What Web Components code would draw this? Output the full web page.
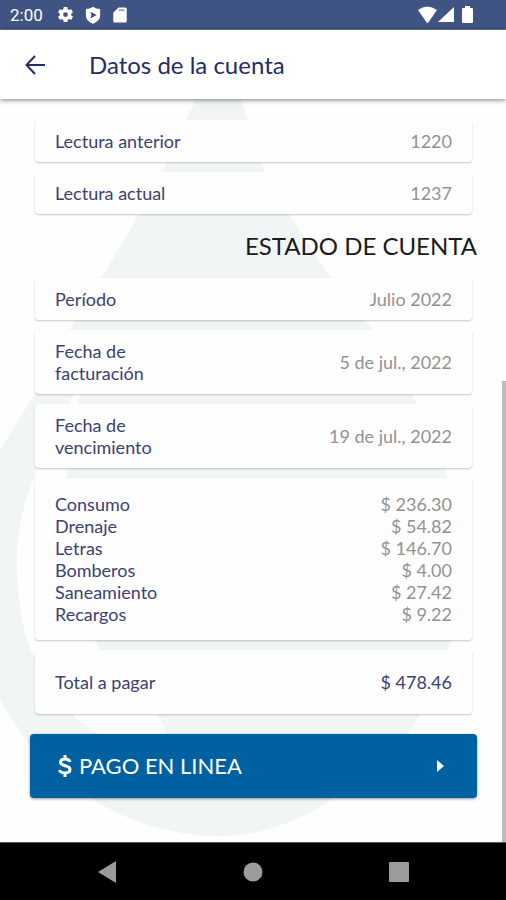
<!DOCTYPE html>
<html lang="es">
<head>
<meta charset="utf-8">
<meta name="viewport" content="width=device-width, initial-scale=1">
<title>Datos de la cuenta</title>
<style>
  html, body { margin: 0; }
  body { font-family: Lato, "Liberation Sans", sans-serif; background: #fefefe; }
</style>
</head>
<body>
<account-screen>
  <status-bar slot="status" time="2:00"></status-bar>
  <app-header slot="header">Datos de la cuenta</app-header>
  <info-card><info-row label="Lectura anterior">1220</info-row></info-card>
  <info-card><info-row label="Lectura actual">1237</info-row></info-card>
  <section-title>ESTADO DE CUENTA</section-title>
  <info-card><info-row label="Período">Julio 2022</info-row></info-card>
  <info-card><info-row label="Fecha de facturación">5 de jul., 2022</info-row></info-card>
  <info-card><info-row label="Fecha de vencimiento">19 de jul., 2022</info-row></info-card>
  <info-card class="list">
    <info-row label="Consumo">$ 236.30</info-row>
    <info-row label="Drenaje">$ 54.82</info-row>
    <info-row label="Letras">$ 146.70</info-row>
    <info-row label="Bomberos">$ 4.00</info-row>
    <info-row label="Saneamiento">$ 27.42</info-row>
    <info-row label="Recargos">$ 9.22</info-row>
  </info-card>
  <info-card class="total"><info-row class="strong" label="Total a pagar">$ 478.46</info-row></info-card>
  <pay-button>PAGO EN LINEA</pay-button>
  <nav-bar slot="nav"></nav-bar>
</account-screen>

<script>
const define = (name, html, setup) => {
  const template = document.createElement('template');
  template.innerHTML = html;
  customElements.define(name, class extends HTMLElement {
    constructor() {
      super();
      this.attachShadow({ mode: 'open' }).append(template.content.cloneNode(true));
    }
    connectedCallback() { if (setup) setup(this, this.shadowRoot); }
  });
};

define('account-screen', `
<style>
  :host { display: grid; grid-template-rows: auto auto 1fr auto; min-height: 100vh; }
  main { position: relative; isolation: isolate; overflow: hidden; background: #fefefe; }
  .mark { position: absolute; z-index: -1; top: 0; left: 0; width: 100%; height: 743px; }
  .content { display: flex; flex-direction: column; gap: 10px; padding: 21px 34px 44px 35px; }
  .thumb { position: absolute; top: 38%; right: 0; bottom: 0; width: 4px; background: #bcbcbc; }
</style>
<slot name="status"></slot>
<slot name="header"></slot>
<main>
  <svg class="mark" viewBox="0 99 506 743" preserveAspectRatio="xMidYMin meet" aria-hidden="true">
    <path fill="#f1f5f6" d="M196 99H241L264 170L289 214L330 277L370 326L414 398L446 472C472 535 467 596 450 643C440 674 427 706 408 734C390 762 366 785 335 797C300 822 260 836 218 836C170 836 125 820 88 797C58 779 40 761 25 739L0 700C-22 640 -22 500 0 450L37 390L74 322L102 277L139 214L167 163Z"/>
    <path fill="#fefefe" d="M37 320H75L69 328L37 390ZM74 394C60 420 42 450 35 476C20 510 16 540 17 570C18 605 23 635 34 657C44 681 57 701 75 717C96 738 130 750 168 750L165 728C160 715 145 700 132 692C116 677 105 662 95 641C70 600 55 530 67 477C68 440 73 415 81 394Z"/>
  </svg>
  <div class="content"><slot></slot></div>
  <div class="thumb"></div>
</main>
<slot name="nav"></slot>`);

define('status-bar', `
<style>
  :host { display: flex; align-items: center; justify-content: space-between; box-sizing: border-box; height: 30px; padding: 0 33px 0 10px; background: #3f5482; color: #fff; font: 400 17px/30px Roboto, sans-serif; border-bottom: 1px solid #6a7ba0; }
  div { display: flex; align-items: center; }
  .left { gap: 9px; }
  .left span { margin-right: 4px; }
  .right { gap: 1px; }
  svg { display: block; fill: #fff; }
</style>
<div class="left"><span></span>
  <svg width="19" height="19" viewBox="0 0 24 24"><path d="M19.14 12.94c.04-.3.06-.61.06-.94s-.02-.64-.07-.94l2.03-1.58a.5.5 0 0 0 .12-.61l-1.92-3.32a.5.5 0 0 0-.59-.22l-2.39.96a7 7 0 0 0-1.62-.94l-.36-2.54a.5.5 0 0 0-.48-.41h-3.84a.5.5 0 0 0-.47.41l-.36 2.54a7.400 7.400 0 0 0-1.620.94l-2.390-.96a.5.5 0 0 0-.59.22L2.740 8.870a.5.5 0 0 0 .12.610l2.030 1.580a6 6 0 0 0 0 1.880l-2.030 1.580a.5.5 0 0 0-.12.610l1.920 3.320c.12.220.370.290.590.220l2.390-.96c.5.380 1.030.7 1.620.94l.360 2.540c.05.240.240.410.480.410h3.840c.240 0 .440-.17.470-.41l.360-2.540a7.400 7.400 0 0 0 1.620-.94l2.390.96c.220.080.470 0 .590-.22l1.920-3.320a.5.5 0 0 0-.12-.61zM12 15a3 3 0 1 1 0-6 3 3 0 0 1 0 6z"/></svg>
  <svg width="18" height="18" viewBox="0 0 24 24"><path fill-rule="evenodd" d="M12 1C9 3 6 4 2.500 4V12C2.500 17.500 6 21.500 12 23.500C18 21.500 21.500 17.500 21.500 12V4C18 4 15 3 12 1ZM8.500 7.500L17 12L8.500 16.500L10 12Z"/></svg>
  <svg width="18" height="18" viewBox="0 0 24 24"><path d="M10 2H19a2 2 0 0 1 2 2V20a2 2 0 0 1-2 2H5a2 2 0 0 1-2-2V9Z"/><path fill="#a9b4cb" d="M10 4H18V7H10Z"/></svg>
</div>
<div class="right">
  <svg width="19" height="17" viewBox="0 0 19 17"><path d="M0 4Q9 -3 19 4L10 17H9Z"/></svg>
  <svg width="17" height="17" viewBox="0 0 17 17"><path d="M16 1V16H0Z"/></svg>
  <svg width="17" height="17" viewBox="0 0 17 17"><path d="M9 0H14V2H16a1 1 0 0 1 1 1V16a1 1 0 0 1-1 1H7a1 1 0 0 1-1-1V3a1 1 0 0 1 1-1H9Z"/></svg>
</div>`, (host, root) => { root.querySelector('span').textContent = host.getAttribute('time'); });

define('app-header', `
<style>
  :host { display: flex; align-items: center; gap: 37px; box-sizing: border-box; height: 69px; padding: 0 18px; background: #fff; color: #252c66; position: relative; z-index: 1; box-shadow: 0 1px 5px rgba(0,0,0,.5); }
  button { display: grid; place-items: center; width: 34px; height: 34px; padding: 0; border: 0; background: none; color: inherit; }
  h1 { margin: 0; font-size: 24px; line-height: 34px; font-weight: 400; }
</style>
<button type="button" aria-label="Volver"><svg width="20" height="20" viewBox="0 0 20 20" fill="none" stroke="currentColor" stroke-width="2"><path d="M20 10H2M10 1L1.500 10L10 19"/></svg></button>
<h1><slot></slot></h1>`);

define('section-title', `
<style>
  :host { display: block; margin-right: -5px; }
  h2 { margin: 0; text-align: right; font-size: 24px; line-height: 44px; font-weight: 400; color: #1b1b1b; }
</style>
<h2><slot></slot></h2>`);

define('info-card', `
<style>
  :host { display: block; padding: 10px 20px; background: #fefefe; border-radius: 4px; box-shadow: 0 1px 2px rgba(0,0,0,.22); }
  :host(.list) { padding: 15px 20px; }
  :host(.total) { padding: 21px 20px; }
</style>
<slot></slot>`);

define('info-row', `
<style>
  :host { display: block; color: #929292; font-size: 18px; line-height: 22px; }
  :host(.strong) { color: #3c4176; }
  dl { display: flex; justify-content: space-between; align-items: center; margin: 0; }
  dt { max-width: 140px; color: #3c4176; }
  dd { margin: 0; white-space: nowrap; }
</style>
<dl><dt></dt><dd><slot></slot></dd></dl>`, (host, root) => { root.querySelector('dt').textContent = host.getAttribute('label'); });

define('pay-button', `
<style>
  :host { display: block; margin: 10px -5px 0; }
  button { display: flex; align-items: center; width: 100%; height: 64px; padding: 0 32px 0 28px; border: 0; border-radius: 4px; background: #0061a2; color: #fff; font: 400 22px/28px Lato, sans-serif; box-shadow: 0 1px 3px rgba(0,0,0,.4); }
  .label { flex: 1; text-align: left; margin-left: 7px; }
</style>
<button type="button">
  <svg width="14" height="22" viewBox="0 0 14 22" fill="none" stroke="#fff" stroke-width="3"><path d="M12 7C11 3 3 3 2.500 7C2.500 12 12 9.500 12 14.500C12 19 2.500 19 1.500 15M7 0V4M7 18V22"/></svg>
  <span class="label"><slot></slot></span>
  <svg width="8" height="12" viewBox="0 0 8 12" fill="#fff"><path d="M0 0L7 6L0 12Z"/></svg>
</button>`);

define('nav-bar', `
<style>
  :host { display: block; background: #000; border-top: 1px solid #555; }
  nav { display: grid; grid-template-columns: repeat(3, 146px); justify-content: center; height: 58px; }
  button { display: grid; place-items: center; padding: 0; border: 0; background: none; }
  svg { display: block; fill: #9b9b9b; }
</style>
<nav>
  <button type="button" aria-label="Atrás"><svg width="20" height="22" viewBox="0 0 20 22"><path d="M19 0V22L1 11Z"/></svg></button>
  <button type="button" aria-label="Inicio"><svg width="20" height="20" viewBox="0 0 20 20"><circle cx="10" cy="10" r="9.500"/></svg></button>
  <button type="button" aria-label="Recientes"><svg width="20" height="20" viewBox="0 0 20 20"><rect width="20" height="20" rx="1"/></svg></button>
</nav>`);
</script>
</body>
</html>
